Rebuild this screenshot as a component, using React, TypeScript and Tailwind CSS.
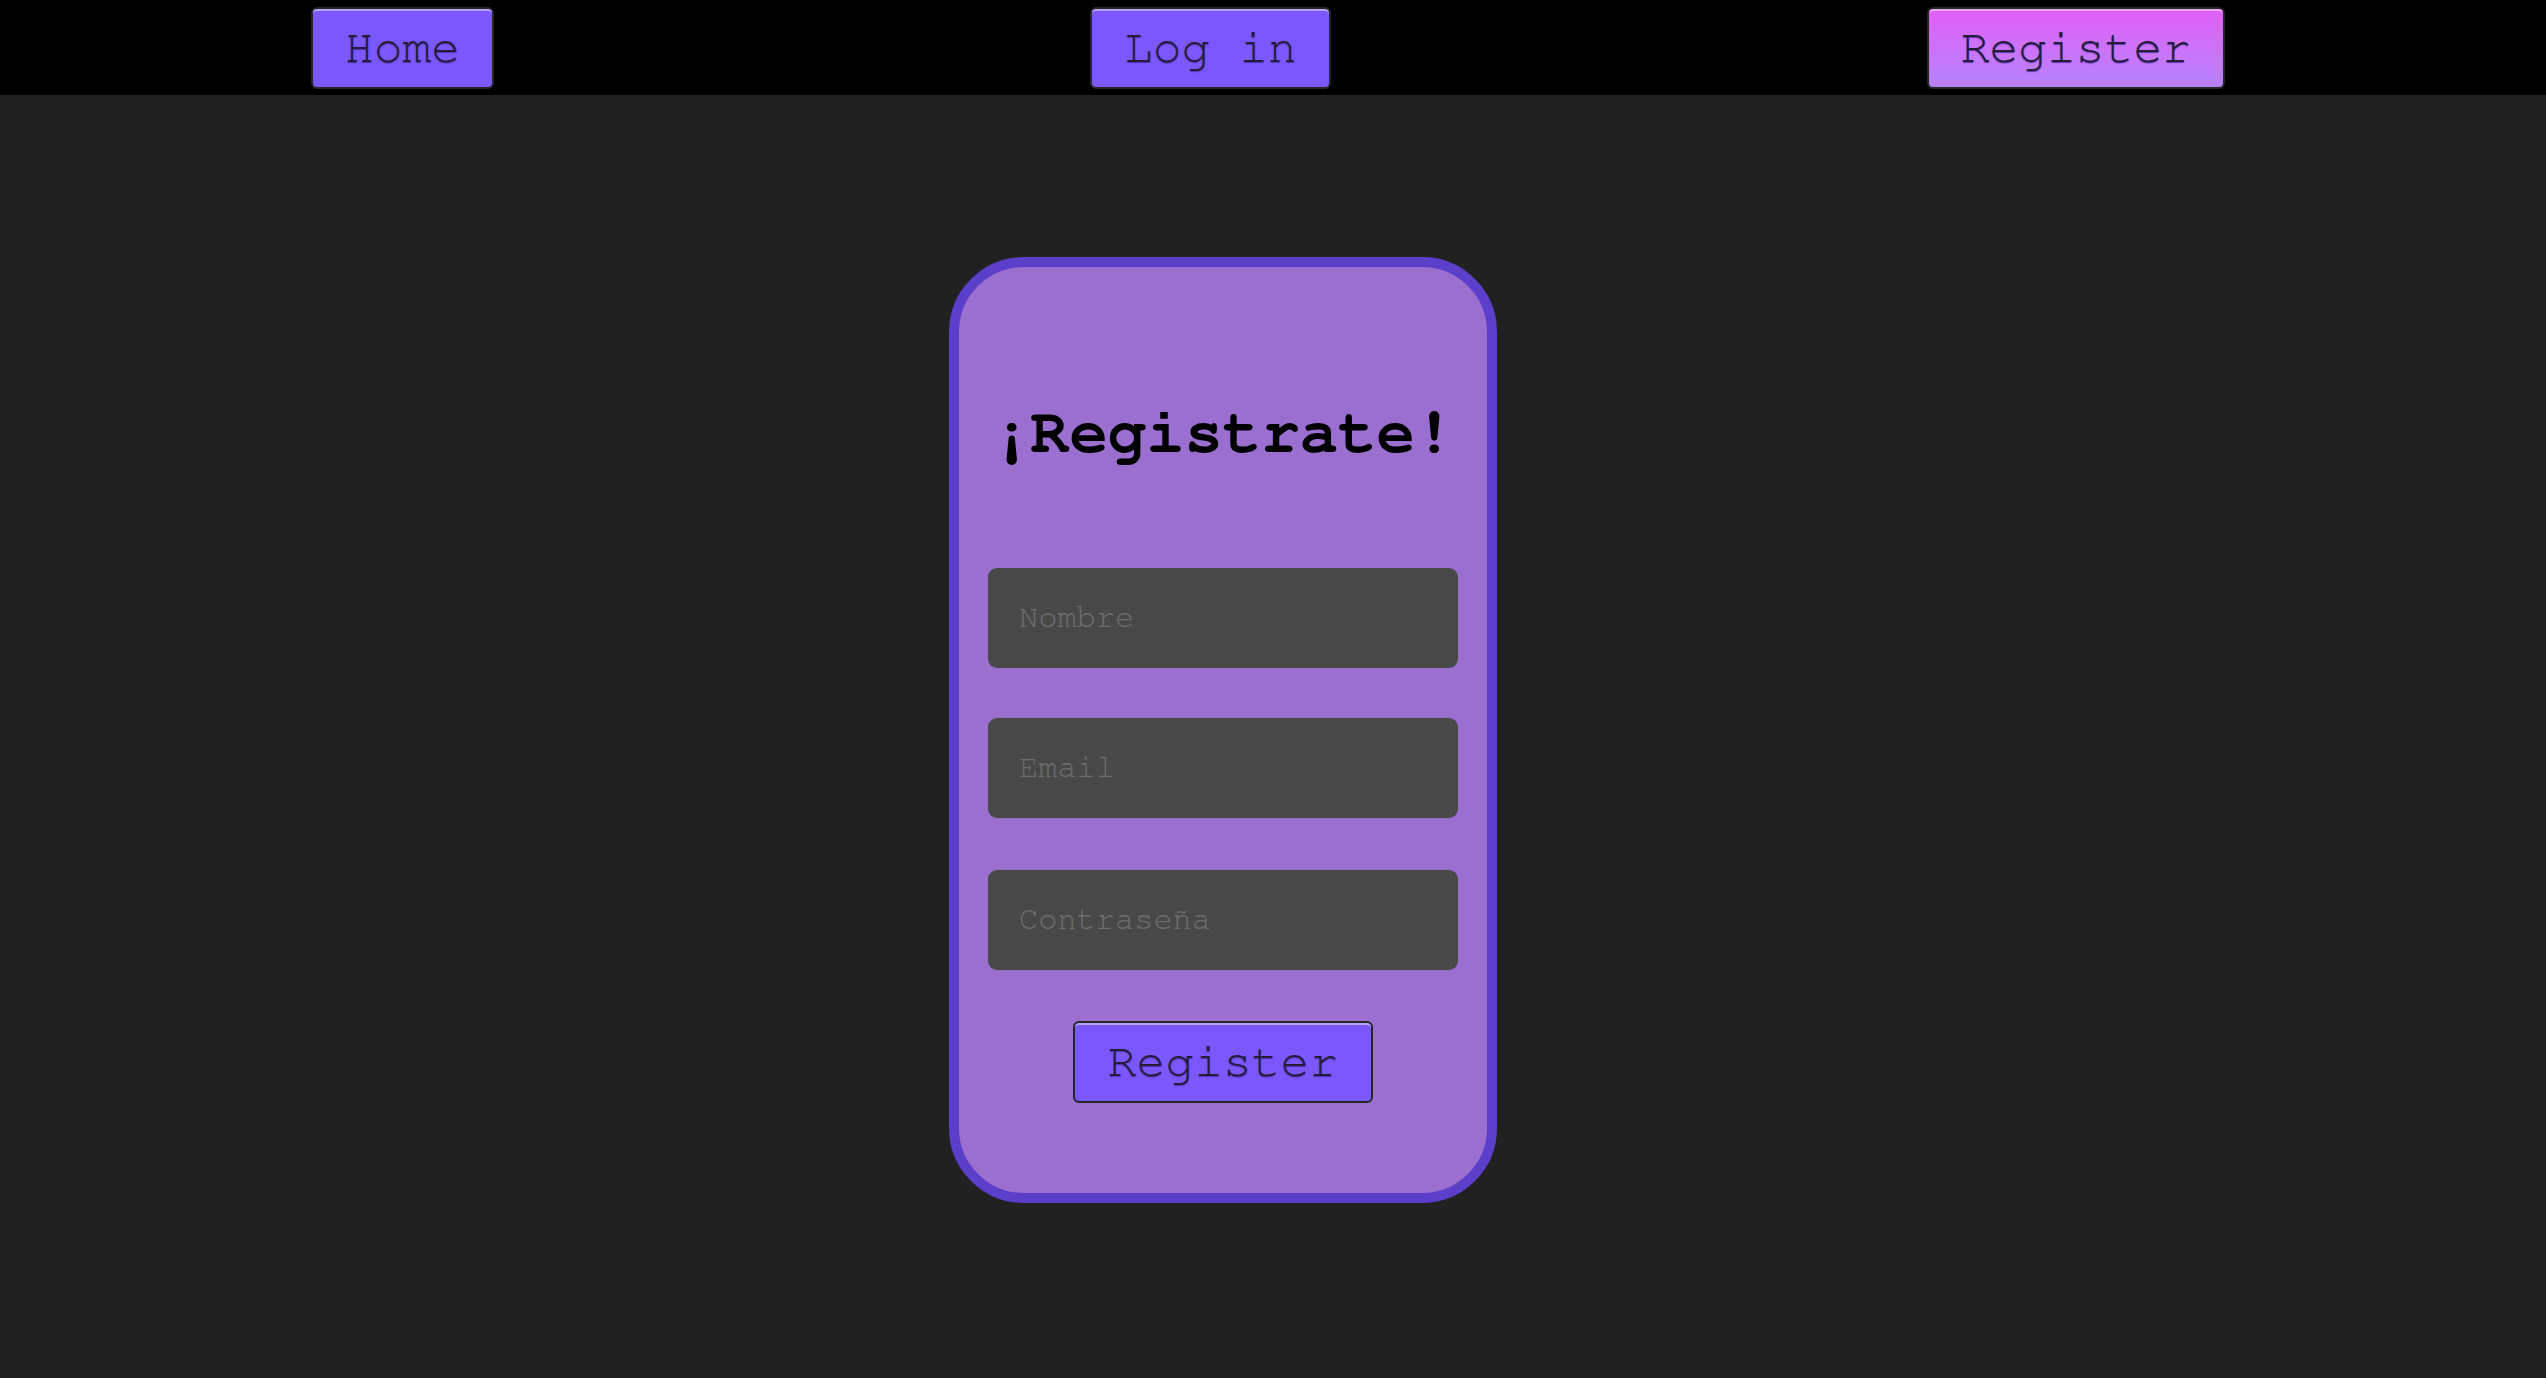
import React from 'react';

/**
 * Register page
 * Top nav with three links and a centered sign-up card.
 */

const mono = { fontFamily: '"Nimbus Mono PS", "FreeMono", "Courier", "Liberation Mono", monospace' };

const navBtn =
  'rounded-[6px] border-2 border-[#262626] py-[12px] text-[48px] leading-[54px] text-[#241d3a] shadow-[inset_0_2px_0_rgba(255,255,255,0.45)] [text-shadow:0_1px_1px_rgba(70,40,160,0.8)]';

function NavBar() {
  return (
    <nav className="flex h-[95px] items-center justify-around bg-black pl-[13px] pr-[23px]">
      <a className={`${navBtn} bg-[#7b58fb] px-[32px]`}>Home</a>
      <a className={`${navBtn} bg-[#7b58fb] px-[32px]`}>Log in</a>
      <a className={`${navBtn} bg-gradient-to-b from-[#e15ef9] to-[#b582f9] px-[32px]`}>Register</a>
    </nav>
  );
}

function Field({ placeholder, type = 'text', className = '' }: { placeholder: string; type?: string; className?: string }) {
  return (
    <input
      type={type}
      placeholder={placeholder}
      style={mono}
      className={`h-[100px] w-[470px] rounded-[9px] bg-[#484848] px-[31px] pb-[2px] text-[32px] text-[#ddd] outline-none placeholder:text-[#6e6e6e] ${className}`}
    />
  );
}

export default function App() {
  return (
    <div style={mono} className="min-h-screen bg-[#212121]">
      <NavBar />

      <main className="flex justify-center pr-[100px] pt-[162px]">
        {/* Sign-up card */}
        <form className="flex h-[946px] w-[548px] flex-col items-center rounded-[75px] border-[10px] border-[#5b3ec9] bg-[#9a6fd0] pt-[130px]">
          <h1 className="text-[64px] font-bold leading-[72px] text-black">¡Registrate!</h1>

          <Field placeholder="Nombre" className="mt-[99px]" />
          <Field placeholder="Email" type="email" className="mt-[50px]" />
          <Field placeholder="Contraseña" type="password" className="mt-[52px]" />

          <button
            type="button"
            style={mono}
            className={`${navBtn} mt-[51px] bg-[#7b58fb] px-[33px] shadow-[inset_0_2px_0_rgba(255,255,255,0.45),0_0_6px_rgba(0,0,0,0.25)]`}
          >
            Register
          </button>
        </form>
      </main>
    </div>
  );
}
